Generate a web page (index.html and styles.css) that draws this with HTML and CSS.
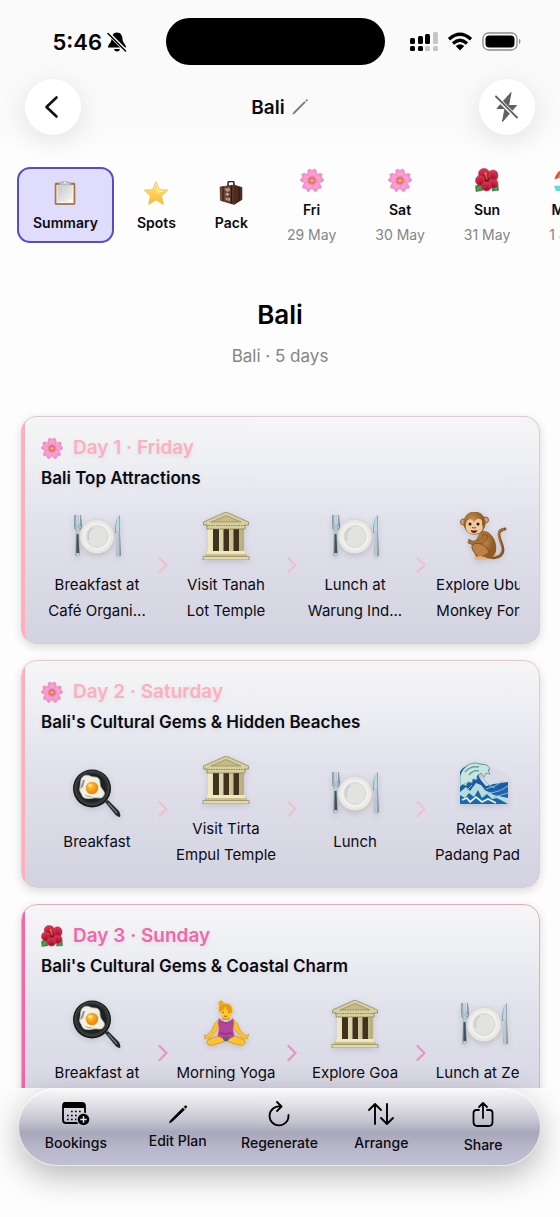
FILE: index.html
```html
<!DOCTYPE html>
<html lang="en">

<head>
    <meta charset="UTF-8">
    <meta name="viewport" content="width=device-width, initial-scale=1.0">
    <title>Bali</title>
    <link rel="stylesheet" href="styles.css">
</head>

<body>
    <!-- Shared pictograms -->
    <svg class="sprite" aria-hidden="true">
        <defs>
            <linearGradient id="stone" x1="0" x2="1"><stop offset="0" stop-color="#f1eac4" /><stop offset="1" stop-color="#b8ad7e" /></linearGradient>
            <linearGradient id="steel" x1="0" x2="1"><stop offset="0" stop-color="#8496a5" /><stop offset=".5" stop-color="#c4d4de" /><stop offset="1" stop-color="#697986" /></linearGradient>
            <radialGradient id="china"><stop offset="0" stop-color="#ecebea" /><stop offset=".55" stop-color="#e2e1df" /><stop offset=".6" stop-color="#f8f7f5" /><stop offset="1" stop-color="#e4e2de" /></radialGradient>
            <radialGradient id="yolk" cx=".4" cy=".35"><stop offset="0" stop-color="#ffcf4a" /><stop offset="1" stop-color="#f08c0c" /></radialGradient>
            <radialGradient id="petal" cx=".5" cy=".9" r=".9"><stop offset="0" stop-color="#e75fa0" /><stop offset=".5" stop-color="#fba3d2" /><stop offset="1" stop-color="#f58cc6" /></radialGradient>
            <radialGradient id="redPetal" cx=".5" cy=".8" r=".8"><stop offset="0" stop-color="#a50f2c" /><stop offset="1" stop-color="#e23b58" /></radialGradient>
            <linearGradient id="gold" x1="0" y1="0" x2="0" y2="1"><stop offset="0" stop-color="#ffe98a" /><stop offset="1" stop-color="#fdb927" /></linearGradient>
            <radialGradient id="fur" cx=".4" cy=".35"><stop offset="0" stop-color="#c79150" /><stop offset="1" stop-color="#8f5a24" /></radialGradient>
            <linearGradient id="paper" x1="0" y1="0" x2="1" y2="1"><stop offset="0" stop-color="#c9cacc" /><stop offset="1" stop-color="#f4f4f4" /></linearGradient>
            <linearGradient id="leather" x1="0" x2="1"><stop offset="0" stop-color="#7a4a37" /><stop offset="1" stop-color="#42231a" /></linearGradient>
        </defs>

        <symbol id="plate" viewBox="0 0 48 48">
            <circle cx="24" cy="25" r="17.5" fill="#bdbab6" />
            <circle cx="24" cy="24.5" r="17.2" fill="url(#china)" stroke="#d2d0cc" stroke-width=".5" />
            <circle cx="24" cy="24.5" r="11" fill="#e2e2e0" stroke="#cfcfcd" stroke-width=".8" />
            <path d="M16 28a9 9 0 0 1 4-12" fill="none" stroke="#c4c4c4" stroke-width="1.2" />
            <path d="M1 3v11c0 3 1 4 2 5l-1 24q2 4 5 0L6 19c2-1 3-3 3-5L8 3H7v9H6V3H4.500v9H3.500V3H1z" fill="url(#steel)" />
            <path d="M3.500 22h2l.8 19h-3z" fill="#46505a" />
            <path d="M2.500 15h5.500" stroke="#9fc3d6" stroke-width="2" />
            <path d="M47 3c-4 2-5 9-5 18h2l-1 22q2 4 5 0L47 21z" fill="url(#steel)" />
            <path d="M46 5c-3 4-3 9-3 15h3z" fill="#b7d8e4" />
        </symbol>

        <symbol id="temple" viewBox="0 0 48 48">
            <path d="M6 15h36v26H6z" fill="#837850" />
            <path d="M11 17h6v22h-6zM21 17h6v22h-6zM31 17h6v22h-6z" fill="#40311f" />
            <path d="M6 16h5v25H6zM17 16h4.500v25H17zM27 16h4.500v25H27zM37 16h5v25h-5z" fill="url(#stone)" />
            <path d="M24 0L1.500 10v3H5v4h38v-4h3.500v-3z" fill="#d8cf9f" stroke="#857b55" stroke-width=".7" />
            <path d="M24 3.500L9 10h30z" fill="#c4ba8a" stroke="#8b8159" stroke-width=".6" />
            <path d="M4 13.500h40" stroke="#8d835c" stroke-width="1.200" stroke-dasharray="1.500 1" />
            <path d="M5 39h38v3H5z" fill="#f0e8c2" />
            <path d="M3 42h42v3H3z" fill="#c9bf90" />
            <path d="M1 44.500h46V48H1z" fill="#e2d9ab" stroke="#80764f" stroke-width=".6" />
        </symbol>

        <symbol id="monkey" viewBox="0 0 48 48">
            <path d="M28 45c13 3 17-4 14-12s-6-15 3-16" fill="none" stroke="#855324" stroke-width="2.800" stroke-linecap="round" />
            <path d="M29 44c11 2 14-4 12-11s-5-15 3-16" fill="none" stroke="#c08a4b" stroke-width="1" />
            <path d="M21 19c9-2 17 10 15 20-1 7-9 9-19 7-5-7-3-17 4-27z" fill="url(#fur)" />
            <path d="M23 22c-2 6-6 7-11 7l-3-2-1 4 5 2c8 1 14-3 15-9z" fill="#a87137" stroke="#754514" stroke-width=".6" />
            <path d="M29 40c-3-9-15-11-17-6-1 4 4 8 7 12" fill="#b98144" stroke="#7b4c1d" stroke-width=".9" />
            <path d="M15 45q7-2 12 1 1 2-2 2H16q-3-1-1-3z" fill="#eab08a" />
            <circle cx="3.500" cy="10" r="3" fill="#dba47c" stroke="#8a572c" />
            <circle cx="25.500" cy="8" r="3" fill="#dba47c" stroke="#8a572c" />
            <ellipse cx="14.500" cy="11" rx="11" ry="11.500" fill="url(#fur)" />
            <path d="M6 13c0-6 5-8 8-3 3-5 9-4 8 2 3 7-3 10-8 10-6 0-9-4-8-9z" fill="#f2c79c" />
            <circle cx="10" cy="12" r="1.500" fill="#2b1b10" />
            <circle cx="18" cy="12" r="1.500" fill="#2b1b10" />
            <path d="M12 15.500q2 1 4 0" stroke="#81502f" fill="none" />
            <path d="M10.500 18q3.500 1 7 0-1 3-3.500 3t-3.500-3z" fill="#56221c" />
        </symbol>

        <symbol id="pan" viewBox="0 0 48 48">
            <path d="M32 33l3-2 11 11q2 4 1 6-3 0-6-4z" fill="#24272a" />
            <path d="M35 34l9 10" stroke="#777b80" stroke-width="1.300" />
            <circle cx="19" cy="19.500" r="19" fill="#17191a" />
            <circle cx="19" cy="19" r="17" fill="#303434" stroke="#555956" stroke-width=".7" />
            <circle cx="19" cy="19" r="14.500" fill="#1e2222" />
            <path d="M11 7c4-2 6 1 10 1 5 0 6 3 6 7 0 5 6 7 4 11-2 5-7 2-11 3-5 1-10 1-11-3-1-3-3-3-2-8 1-4 0-9 4-11z" fill="#f1f0e6" stroke="#c7c9bc" stroke-width=".8" />
            <path d="M10 11l-3 9 3-2 2-7zM11 26q5 3 9 2" fill="#8f978e" />
            <circle cx="19" cy="19" r="6.300" fill="url(#yolk)" />
            <ellipse cx="17" cy="16.500" rx="2" ry="1.200" fill="#ffe59a" />
        </symbol>

        <symbol id="wave" viewBox="0 0 48 48">
            <path d="M0 48V16C4 8 17 5 27 10l3 7-7-3c-5 2-5 7-2 10l5 6 22-8v26z" fill="#195aa5" />
            <path d="M21 24l3-8 10-2 14 8v4l-14 2-8 2z" fill="#d9dbe6" />
            <path d="M0 20C4 9 12 5 20 8l7 1 3 4-2 1 2 4-4-1-2 4-3-4-4 3v4l-4-1-1 4-4-1-2 4-3-2-3 3z" fill="#c7e6df" stroke="#538f9e" stroke-width=".8" />
            <path d="M5 16c4-5 9-6 14-5M9 19c3-4 6-5 10-4" fill="none" stroke="#689f9f" stroke-width="1.500" />
            <path d="M0 36l6-5 4 4 6-8 5 2 5 6 9 2 13-8v19H0z" fill="#b9dcda" />
            <path d="M24 33q12 3 24-4v13l-14-3z" fill="#1e63ac" />
            <path d="M3 29l5-3M7 34l5-5M23 21q3 8 12 11M26 33q9-2 17-8M28 37q10 0 20-7M34 41l14-4" fill="none" stroke="#88bdd1" stroke-width="1" />
            <path d="M0 48v-9l5 3 4-5 5 4 4-7 4 8 5-4 5 5 5-1 11 6z" fill="#1b67ab" />
            <path d="M2 44l5-2 3 4 6-5 6 5 6-3 8 4" fill="none" stroke="#e5f5f0" stroke-width="1.700" />
        </symbol>

        <symbol id="yoga" viewBox="0 0 48 48">
            <path d="M17 19q-6 5-7 11l-6 6-2-1 1 4 5-1 7-8 3-4zM31 19q6 5 7 11l6 6 3-2-2 5-5-1-7-8-3-4z" fill="#fbc12e" stroke="#d58e12" stroke-width=".6" />
            <path d="M21 14h6l1 6h-8z" fill="#eaa51d" />
            <path d="M17 18l3 3q4 3 8 0l3-3 1 5-1 6 2 10H15l2-10-1-6z" fill="#b2459a" />
            <path d="M20 21q4 4 8 0M18 33q6 2 12 0" fill="none" stroke="#7d276c" stroke-width=".9" />
            <path d="M15 36l-9 4c-3 4 1 6 5 5l13-4 13 4c5 1 8-2 5-5l-9-4-8 4z" fill="#fdc331" stroke="#d78f12" stroke-width=".8" />
            <path d="M20 37h8l-2 4h-4z" fill="#59627a" />
            <path d="M17 10C15 5 19 2 24 3c6 0 8 6 6 11q-1 4-6 4c-4 0-6-4-7-8z" fill="#fdc72c" />
            <path d="M17 12C16 5 20 3 24 4c5 0 7 5 6 9-4-2-6-3-7-7-1 4-3 5-6 6z" fill="#e79b15" />
            <circle cx="19" cy="3" r="2.600" fill="#eda91e" />
            <path d="M20 12q1 1 2 0M26 12q1 1 2 0M22 16q2 1 3 0" fill="none" stroke="#8b4b12" stroke-width=".8" />
        </symbol>

        <symbol id="blossom" viewBox="0 0 48 48">
            <g fill="url(#petal)" stroke="#e07ab2" stroke-width="1">
                <path d="M24 25C15 20 13 6 18 2l6 3 6-3c6 5 3 18-6 23z" />
                <path d="M24 25C15 20 13 6 18 2l6 3 6-3c6 5 3 18-6 23z" transform="rotate(72 24 25)" />
                <path d="M24 25C15 20 13 6 18 2l6 3 6-3c6 5 3 18-6 23z" transform="rotate(144 24 25)" />
                <path d="M24 25C15 20 13 6 18 2l6 3 6-3c6 5 3 18-6 23z" transform="rotate(216 24 25)" />
                <path d="M24 25C15 20 13 6 18 2l6 3 6-3c6 5 3 18-6 23z" transform="rotate(288 24 25)" />
            </g>
            <path d="M24 17v16M16 22l16 6M19 32l10-14M19 18l10 14M16 28l16-6" stroke="#c95284" stroke-width=".8" />
            <circle cx="24" cy="25" r="4.500" fill="#f4b936" stroke="#b9591f" />
        </symbol>

        <symbol id="hibiscus" viewBox="0 0 48 48">
            <path d="M12 30L1 36l1 11 13-2 3-9zM35 34l11-1 1 12-13 1z" fill="#42914b" stroke="#276b32" />
            <path d="M14 35L4 44M37 38l7 5" stroke="#9acb76" />
            <g fill="url(#redPetal)" stroke="#a41d38" stroke-width="1">
                <ellipse cx="18" cy="11" rx="11" ry="10" />
                <ellipse cx="36" cy="15" rx="10" ry="11" />
                <ellipse cx="11" cy="25" rx="10" ry="10" />
                <ellipse cx="36" cy="31" rx="10" ry="9" />
                <ellipse cx="23" cy="36" rx="10" ry="10" />
            </g>
            <circle cx="24" cy="23" r="5" fill="#871025" />
            <path d="M24 22l-3-10" stroke="#d9752c" stroke-width="2.500" stroke-linecap="round" />
            <circle cx="21" cy="11" r="2.500" fill="#dc812e" />
        </symbol>

        <symbol id="clipboard" viewBox="0 0 48 48">
            <rect x="4" y="4" width="40" height="43" rx="2" fill="#b3823d" stroke="#80592b" />
            <path d="M7 8h34v36H7z" fill="#f7f7f7" />
            <path d="M9 9h30v29q-4 3-9 4H9z" fill="url(#paper)" />
            <path d="M39 38l-9 4 1-5z" fill="#fff" />
            <path d="M12 4h6q0-4 6-4t6 4h6v4H12z" fill="#c7cccf" stroke="#858b8e" />
            <circle cx="24" cy="3.500" r="1.800" fill="#f6f6f6" />
        </symbol>

        <symbol id="star" viewBox="0 0 48 48">
            <path d="M24 1l7 16 17 1-13 12 4 17-15-9-15 9 4-17L0 18l17-1z" fill="url(#gold)" stroke="#eaae35" stroke-linejoin="round" />
            <path d="M24 4l5 14 14 2-16 4z" fill="#fff0a8" opacity=".8" />
        </symbol>

        <symbol id="suitcase" viewBox="0 0 48 48">
            <path d="M18 10V4q0-3 4-3h5q3 0 3 3v5" fill="none" stroke="#34201a" stroke-width="3" />
            <path d="M2 12l28-4 16 5v24L30 47 3 39z" fill="url(#leather)" stroke="#2b1712" />
            <path d="M30 8v39l16-10V13z" fill="#4c2b20" />
            <path d="M8 11v29M25 9v36M40 12v28" stroke="#2d1711" stroke-width="2" />
            <path d="M11 16l8-3 4 5-6 4zM12 27l4-4 5 3-3 4zM13 33l9 1v6l-8-2z" fill="#b8aaa0" />
            <path d="M16 15l3 3M15 34l4 3" stroke="#884737" stroke-width="2" />
        </symbol>

        <symbol id="umbrella" viewBox="0 0 48 48">
            <path d="M3 39q20-8 42 2v5H3z" fill="#f5d27b" />
            <path d="M0 36q12-3 26 4l-6 6H4z" fill="#64ded4" />
            <path d="M25 14l6 29" stroke="#a1763d" stroke-width="3" />
            <path d="M1 23Q5 3 24 2q19 1 23 16L31 14l-14 5-8 1z" fill="#ef4d33" />
            <path d="M9 19Q13 4 24 2q4 7 7 12-7 1-14 5z" fill="#ffbe35" />
        </symbol>

        <symbol id="next" viewBox="0 0 10 18">
            <path d="M1.500 2l7 7-7 7" fill="none" stroke="currentColor" stroke-width="2.300" stroke-linecap="round" stroke-linejoin="round" />
        </symbol>
    </svg>

    <!-- Status bar -->
    <div class="status-bar">
        <div class="status-left">
            <span>5:46</span>
            <svg width="20" height="20" viewBox="0 0 20 20">
                <path d="M10 .5C6 .5 4.500 4 4.500 7c0 4-3.500 5-3.500 8.500h18C19 12 15.500 11 15.500 7c0-3-1.500-6.500-5.500-6.500zM7 17h6q-.5 2.500-3 2.500T7 17z" />
                <path d="M1 1l18 18" stroke="#fafafa" stroke-width="3.600" />
                <path d="M1 1.500l17.500 17.500" stroke="#000" stroke-width="1.500" stroke-linecap="round" />
            </svg>
        </div>
        <div class="island"></div>
        <div class="status-right">
            <svg width="28" height="20" viewBox="0 0 28 20">
                <rect x="0" y="6" width="5" height="6" rx="1.500" />
                <rect x="8" y="4" width="5" height="8" rx="1.500" />
                <rect x="15" y="2" width="5" height="10" rx="1.500" />
                <rect x="23" y="0" width="5" height="12" rx="1.500" fill="#c6c6c6" />
                <rect x="0" y="14" width="5" height="5" rx="1.500" />
                <rect x="8" y="14" width="5" height="5" rx="1.500" />
                <rect x="15" y="14" width="5" height="5" rx="1.500" fill="#c6c6c6" />
                <rect x="23" y="14" width="5" height="5" rx="1.500" fill="#c6c6c6" />
            </svg>
            <svg width="26" height="20" viewBox="0 0 26 20">
                <path d="M2 7.200q11-10 22 0M6 11.400q7-6.400 14 0" fill="none" stroke="#000" stroke-width="3.400" />
                <path d="M8.700 14q4.300-3.600 8.600 0L13 18.500z" />
            </svg>
            <svg width="40" height="20" viewBox="0 0 40 20">
                <rect x="1" y="1" width="34" height="17" rx="5.500" fill="none" stroke="#8c8c8c" stroke-width="1.300" />
                <rect x="3.500" y="3.500" width="29" height="12" rx="3.800" />
                <path d="M37 6.500q3 3 0 6z" fill="#8c8c8c" />
            </svg>
        </div>
    </div>

    <!-- Header -->
    <header class="header">
        <button class="round-btn" aria-label="Back">
            <svg width="18" height="24" viewBox="0 0 18 24">
                <path d="M12.500 2.500L2.500 12l10 9.500" fill="none" stroke="#111" stroke-width="2.600" stroke-linecap="round" stroke-linejoin="round" />
            </svg>
        </button>
        <button class="trip-name">
            Bali
            <svg width="18" height="18" viewBox="0 0 18 18" fill="#777">
                <path d="M13.400 3.300l1.300 1.300L4 15.300l-2.800 1.400 1.400-2.700z" />
                <path d="M14.300 2.400l.9-.9q.8-.5 1.300.1.600.6 0 1.200l-.9.900z" />
            </svg>
        </button>
        <button class="round-btn" aria-label="Flash off">
            <svg width="28" height="32" viewBox="0 0 28 32">
                <path d="M18 1.500L4 17.500h8L9.500 30.500 23.500 14.500h-8z" fill="#606060" stroke="#606060" stroke-linejoin="round" />
                <path d="M2 5l22 22" stroke="#fff" stroke-width="4" />
                <path d="M3 5.500l21 21" stroke="#606060" stroke-width="1.800" stroke-linecap="round" />
            </svg>
        </button>
    </header>

    <main class="content">
        <nav class="tabs">
            <button class="tab active"><svg><use href="#clipboard" /></svg><span>Summary</span></button>
            <button class="tab"><svg><use href="#star" /></svg><span>Spots</span></button>
            <button class="tab"><svg><use href="#suitcase" /></svg><span>Pack</span></button>
            <button class="tab"><svg><use href="#blossom" /></svg><span>Fri</span><small>29 May</small></button>
            <button class="tab"><svg><use href="#blossom" /></svg><span>Sat</span><small>30 May</small></button>
            <button class="tab"><svg><use href="#hibiscus" /></svg><span>Sun</span><small>31 May</small></button>
            <button class="tab"><svg><use href="#umbrella" /></svg><span>Mon</span><small>1 Jun</small></button>
        </nav>

        <div class="intro">
            <h1>Bali</h1>
            <p>Bali · 5 days</p>
        </div>

        <div class="days">
            <section class="card day-1">
                <h2><svg><use href="#blossom" /></svg>Day 1 · Friday</h2>
                <h3>Bali Top Attractions</h3>
                <div class="steps">
                    <div class="step"><svg><use href="#plate" /></svg><p>Breakfast at<br>Café Organi...</p></div>
                    <svg class="next"><use href="#next" /></svg>
                    <div class="step"><svg><use href="#temple" /></svg><p>Visit Tanah<br>Lot Temple</p></div>
                    <svg class="next"><use href="#next" /></svg>
                    <div class="step"><svg><use href="#plate" /></svg><p>Lunch at<br>Warung Ind...</p></div>
                    <svg class="next"><use href="#next" /></svg>
                    <div class="step"><svg><use href="#monkey" /></svg><p>Explore Ubud<br>Monkey For...</p></div>
                </div>
            </section>

            <section class="card day-2">
                <h2><svg><use href="#blossom" /></svg>Day 2 · Saturday</h2>
                <h3>Bali's Cultural Gems &amp; Hidden Beaches</h3>
                <div class="steps">
                    <div class="step"><svg><use href="#pan" /></svg><p>Breakfast</p></div>
                    <svg class="next"><use href="#next" /></svg>
                    <div class="step"><svg><use href="#temple" /></svg><p>Visit Tirta<br>Empul Temple</p></div>
                    <svg class="next"><use href="#next" /></svg>
                    <div class="step"><svg><use href="#plate" /></svg><p>Lunch</p></div>
                    <svg class="next"><use href="#next" /></svg>
                    <div class="step"><svg><use href="#wave" /></svg><p>Relax at<br>Padang Pad...</p></div>
                </div>
            </section>

            <section class="card day-3">
                <h2><svg><use href="#hibiscus" /></svg>Day 3 · Sunday</h2>
                <h3>Bali's Cultural Gems &amp; Coastal Charm</h3>
                <div class="steps">
                    <div class="step"><svg><use href="#pan" /></svg><p>Breakfast at<br>Hotel</p></div>
                    <svg class="next"><use href="#next" /></svg>
                    <div class="step"><svg><use href="#yoga" /></svg><p>Morning Yoga<br>Class</p></div>
                    <svg class="next"><use href="#next" /></svg>
                    <div class="step"><svg><use href="#temple" /></svg><p>Explore Goa<br>Gajah</p></div>
                    <svg class="next"><use href="#next" /></svg>
                    <div class="step"><svg><use href="#plate" /></svg><p>Lunch at Zest<br>Ubud</p></div>
                </div>
            </section>
        </div>
    </main>

    <!-- Bottom toolbar -->
    <nav class="toolbar">
        <button>
            <svg width="28" height="26" viewBox="2 0 28 26">
                <path d="M5 2h17q3 0 3 3v14q0 3-3 3H6q-3 0-3-3V5q0-3 2-3z" fill="none" stroke="#000" stroke-width="1.800" />
                <path d="M3 2h22v5H3z" />
                <path d="M11 10.500h11M7 14.500h15M7 18.500h10" stroke="#000" stroke-width="1.600" stroke-dasharray="1.700 2.300" />
                <circle cx="23.500" cy="18.500" r="7" fill="#c6c6d2" />
                <circle cx="23.500" cy="18.500" r="5.800" />
                <path d="M20.300 18.500h6.400M23.500 15.300v6.400" stroke="#e8e8ee" stroke-width="1.500" />
            </svg>
            Bookings
        </button>
        <button>
            <svg width="22" height="22" viewBox="0 0 22 22">
                <path d="M15.800 5l1.700 1.700L5 18.500 2.500 19.800l1.200-2.600z" stroke="#000" stroke-width=".8" stroke-linejoin="round" />
                <path d="M17 3.800l.9-.9q.9-.7 1.600.1.700.8 0 1.600l-.9.900z" stroke="#000" stroke-width=".5" />
            </svg>
            Edit Plan
        </button>
        <button>
            <svg width="26" height="26" viewBox="0 0 26 26" fill="none" stroke="#000" stroke-width="1.800" stroke-linecap="round" stroke-linejoin="round">
                <path d="M14.500 5.500A9.500 9.500 0 1 0 22.500 14" />
                <path d="M11 1l4.500 4.500L11 10" />
            </svg>
            Regenerate
        </button>
        <button>
            <svg width="28" height="26" viewBox="0 0 28 26" fill="none" stroke="#000" stroke-width="1.900" stroke-linecap="round" stroke-linejoin="round">
                <path d="M8 23V3M2 9l6-6 6 6M20 3v20M14 17l6 6 6-6" />
            </svg>
            Arrange
        </button>
        <button>
            <svg width="24" height="30" viewBox="0 0 24 30" fill="none" stroke="#000" stroke-width="1.800" stroke-linecap="round" stroke-linejoin="round">
                <path d="M8 11H5.500q-3 0-3 3v9q0 4 4 4h11q4 0 4-4v-9q0-3-3-3H16M12 19V4M8 8l4-4 4 4" />
            </svg>
            Share
        </button>
    </nav>
</body>

</html>
```
FILE: styles.css
```css
/* Basic Styles */
* {
    box-sizing: border-box;
}

body {
    font-family: Inter, "Liberation Sans", sans-serif;
    background: linear-gradient(#fafafa 0, #fafafa 125px, #fdfdfd 150px);
    color: #0b0b10;
    display: flex;
    flex-direction: column;
    height: 100vh;
    margin: 0;
    overflow: hidden;
}

h1,
h2,
h3,
p {
    margin: 0;
}

button {
    font-family: inherit;
    color: inherit;
    background: none;
    border: none;
    padding: 0;
    cursor: pointer;
}

svg {
    flex: none;
}

.sprite {
    position: absolute;
    width: 0;
    height: 0;
}

/* Status bar */
.status-bar {
    display: grid;
    grid-template-columns: 1fr 219px 1fr;
    align-items: center;
    padding: 18px 9px 14px 0;
    color: #000;
}

.status-left {
    display: flex;
    align-items: center;
    justify-content: flex-end;
    gap: 5px;
    padding-right: 39px;
    font-size: 22px;
    font-weight: 600;
}

.island {
    height: 47px;
    border-radius: 24px;
    background-color: #000;
}

.status-right {
    display: flex;
    gap: 9px;
    padding-left: 25px;
}

/* Header */
.header {
    display: flex;
    align-items: center;
    justify-content: space-between;
    height: 56px;
    padding: 0 25px;
}

.round-btn {
    display: flex;
    align-items: center;
    justify-content: center;
    width: 56px;
    height: 56px;
    border-radius: 50%;
    background-color: #fff;
    box-shadow: 0 6px 28px rgba(0, 0, 0, 0.1);
}

.trip-name {
    display: flex;
    align-items: center;
    gap: 6px;
    font-size: 19px;
    font-weight: 600;
}

/* Scrolling content */
.content {
    flex: 1;
    min-height: 0;
    padding-top: 32px;
    overflow: hidden;
}

.tabs {
    display: flex;
    gap: 7px;
    padding-left: 17px;
}

.tab {
    display: flex;
    flex: none;
    flex-direction: column;
    align-items: center;
    justify-content: center;
    height: 76px;
    padding: 3px 14px 0;
    border: 2px solid transparent;
    border-radius: 13px;
    font-size: 14px;
    font-weight: 600;
    line-height: 20px;
}

.tab.active {
    background-color: #dfdcfc;
    border-color: #574dc9;
}

.tab svg {
    width: 24px;
    height: 24px;
    margin-bottom: 8px;
}

.tab small {
    margin-top: 5px;
    font-size: 14px;
    font-weight: 400;
    color: #858585;
}

.intro {
    padding: 56px 0 48px;
    text-align: center;
}

.intro h1 {
    font-size: 26px;
    font-weight: 600;
    line-height: 32px;
    color: #000;
}

.intro p {
    margin-top: 13px;
    font-size: 17px;
    line-height: 24px;
    color: #858585;
}

/* Day cards */
.days {
    display: flex;
    flex-direction: column;
    gap: 16px;
    padding: 0 20px 0 21px;
}

.card {
    --accent: #feafbe;
    padding: 18px 19px 19px;
    border: 1px solid #dccbd5;
    border-left-color: var(--accent);
    border-radius: 16px;
    background: linear-gradient(var(--accent), var(--accent)) left / 4px 100% no-repeat border-box,
        linear-gradient(#f6f6f7 0%, #eeeff3 20%, #e2e2ed 45%, #d3d2e0 100%) border-box;
    box-shadow: 0 3px 10px rgba(0, 0, 0, 0.14);
}

.day-2 {
    border-color: #e6c6d0;
}

.day-3 {
    --accent: #f565aa;
    border-color: #e8a9c6;
}

.card h2 {
    display: flex;
    align-items: center;
    gap: 10px;
    font-size: 19px;
    font-weight: 600;
    line-height: 26px;
    color: var(--accent);
    text-shadow: 0 2px 5px rgba(0, 0, 0, 0.08);
}

.card h2 svg {
    width: 22px;
    height: 22px;
}

.card h3 {
    margin-top: 5px;
    font-size: 17px;
    font-weight: 600;
    line-height: 24px;
    white-space: nowrap;
    text-shadow: 0 2px 5px rgba(0, 0, 0, 0.08);
}

.steps {
    display: flex;
    align-items: center;
    min-height: 118px;
    margin-top: 16px;
    overflow: hidden;
}

.step {
    flex: none;
    width: 112px;
    text-align: center;
    white-space: nowrap;
}

.step svg {
    width: 48px;
    height: 48px;
    margin-top: 6px;
    filter: drop-shadow(0 2px 3px rgba(0, 0, 0, 0.12));
}

.step p {
    margin-top: 8px;
    font-size: 15px;
    line-height: 26px;
}

.next {
    width: 14px;
    height: 18px;
    margin-left: 3px;
    color: var(--accent);
    opacity: 0.6;
}

/* Bottom toolbar */
.toolbar {
    display: flex;
    height: 78px;
    margin: 0 19px 51px 18px;
    padding: 0 6px;
    border: 1px solid rgba(255, 255, 255, 0.6);
    border-radius: 39px;
    background: linear-gradient(#fafafa 0%, #e2e2e7 20%, #c5c5d2 42%, #a9a8ba 57%, #b6b5c9 75%, #c2c0d5 100%) border-box;
    box-shadow: 0 10px 32px rgba(0, 0, 0, 0.28);
}

.toolbar button {
    display: flex;
    flex: 1;
    flex-direction: column;
    align-items: center;
    justify-content: center;
    gap: 6px;
    font-size: 14px;
    font-weight: 500;
    line-height: 20px;
}
```
